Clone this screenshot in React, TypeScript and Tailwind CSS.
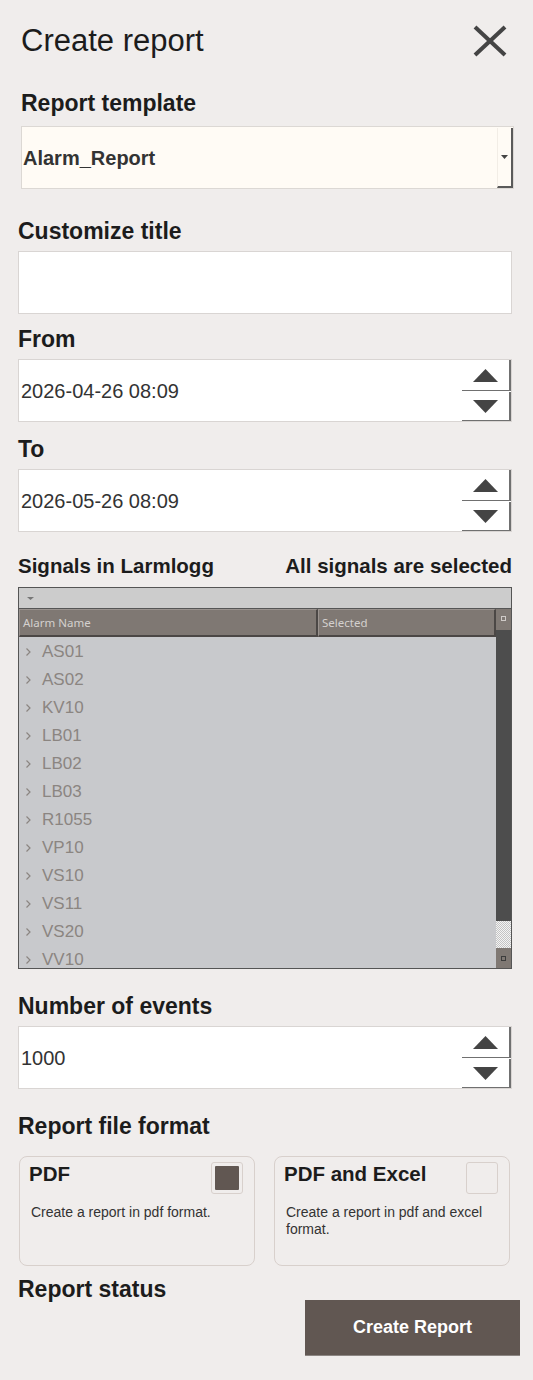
import React from "react";

const SIGNALS = ["AS01", "AS02", "KV10", "LB01", "LB02", "LB03", "R1055", "VP10", "VS10", "VS11", "VS20", "VV10"];

function Label({ children, className = "" }: { children: React.ReactNode; className?: string }) {
  return <div className={`h-[26px] text-[23px] leading-[26px] font-bold text-[#1c1c1c] ${className}`}>{children}</div>;
}

function Triangle({ up }: { up?: boolean }) {
  return (
    <svg width="25" height="13" viewBox="0 0 25 13">
      <polygon points={up ? "12.5,0 25,13 0,13" : "0,0 25,0 12.5,13"} fill="#444" />
    </svg>
  );
}

function SpinBox({ value, className = "" }: { value: string; className?: string }) {
  return (
    <div className={`flex h-[63px] w-[494px] border border-[#d9d5d3] bg-white ${className}`}>
      <div className="flex flex-1 items-center pl-[2px] text-[20px] text-[#333]">{value}</div>
      <div className="flex w-[49px] flex-col">
        <div className="flex h-[31px] items-center justify-center border-r-2 border-b border-[#707070] pt-[1px]">
          <Triangle up />
        </div>
        <div className="h-px bg-white" />
        <div className="flex h-[29px] items-center justify-center border-r-2 border-b border-[#707070]">
          <Triangle />
        </div>
      </div>
    </div>
  );
}

function FormatCard({ title, text, checked }: { title: string; text: string; checked?: boolean }) {
  return (
    <div className="h-[110px] w-[236px] rounded-[8px] border border-[#d8d0cc] pt-[5px] pl-[9px] pr-[11px]">
      <div className="flex items-start justify-between">
        <div className="h-[24px] text-[20.5px] leading-[24px] font-bold text-[#1c1c1c]">{title}</div>
        <div className="h-[32px] w-[32px] rounded-[3px] border border-[#d8d0cc] p-[3px]">
          {checked && <div className="h-full w-full rounded-[1px] bg-[#615752]" />}
        </div>
      </div>
      <div className="mt-[10px] pl-[2px] text-[14px] leading-[17px] text-[#333]">{text}</div>
    </div>
  );
}

function SmallSquare({ dark }: { dark?: boolean }) {
  return <div className={`h-[5px] w-[5px] border ${dark ? "border-[#3c3c3c]" : "border-[#cfcac7]"}`} />;
}

export default function App() {
  return (
    <div className="min-h-[1380px] w-[533px] bg-[#f0edec] pl-[18px] pt-[23px] font-['Liberation_Sans',Arial,sans-serif]">
      {/* header */}
      <div className="ml-[3px] flex w-[493px] items-center justify-between">
        <h1 className="h-[36px] text-[31px] leading-[36px] font-normal text-[#1c1c1c]">Create report</h1>
        <svg width="34" height="32" viewBox="0 0 34 32" className="mr-[7px]">
          <line x1="2" y1="2" x2="32" y2="30" stroke="#444" strokeWidth="4" />
          <line x1="32" y1="2" x2="2" y2="30" stroke="#444" strokeWidth="4" />
        </svg>
      </div>

      <div className="ml-[3px]">
        <Label className="mt-[31px]">Report template</Label>
        <div className="mt-[10px] flex h-[63px] w-[493px] border border-[#dcd8d4] bg-[#fffbf5]">
          <div className="flex flex-1 items-center pl-px text-[20px] font-bold text-[#333]">Alarm_Report</div>
          <div className="mt-px flex w-[16px] items-center justify-center border-l border-l-[#f2ede6] border-r-2 border-b-2 border-r-[#5a5a5a] border-b-[#5a5a5a]">
            <svg width="7" height="4" viewBox="0 0 7 4">
              <polygon points="0,0 7,0 3.5,4" fill="#444" />
            </svg>
          </div>
        </div>
      </div>

      <Label className="mt-[29px]">Customize title</Label>
      <div className="mt-[7px] h-[63px] w-[494px] border border-[#d9d5d3] bg-white" />

      <Label className="mt-[12px]">From</Label>
      <SpinBox className="mt-[7px]" value="2026-04-26 08:09" />

      <Label className="mt-[14px]">To</Label>
      <SpinBox className="mt-[7px]" value="2026-05-26 08:09" />

      <div className="mt-[22px] flex h-[24px] w-[494px] items-center justify-between text-[20.5px] leading-[24px] font-bold text-[#1c1c1c]">
        <span>Signals in Larmlogg</span>
        <span>All signals are selected</span>
      </div>

      {/* signals grid */}
      <div className="mt-[9px] w-[494px] border border-[#555]">
        <div className="flex h-[21px] items-center border-b border-[#555] bg-[#cccccc] pl-[8px]">
          <svg width="7" height="3" viewBox="0 0 7 3">
            <polygon points="0,0 7,0 3.5,3" fill="#777" />
          </svg>
        </div>
        <div className="flex">
          <div className="w-[477px]">
            <div className="flex h-[28px] font-['Noto_Sans',sans-serif] text-[11.5px] text-[#d4d0ce]">
              <div className="flex w-[299px] items-center border-t border-l border-t-[#9a938f] border-l-[#9a938f] border-r-2 border-b-2 border-r-[#4b4745] border-b-[#4b4745] bg-[#7f7873] pl-[3px]">
                Alarm Name
              </div>
              <div className="flex w-[178px] items-center border-t border-l border-t-[#9a938f] border-l-[#9a938f] border-r-2 border-b-2 border-r-[#4b4745] border-b-[#4b4745] bg-[#7f7873] pl-[3px]">
                Selected
              </div>
            </div>
            <div className="h-[331px] overflow-hidden bg-[#c8c9cc]">
              {SIGNALS.map((s) => (
                <div key={s} className="flex h-[28px] items-center pl-[7px] pt-px text-[17px] text-[#8b8581]">
                  <svg width="5" height="8" viewBox="0 0 5 8">
                    <polyline points="0.5,0.5 4,4 0.5,7.5" fill="none" stroke="#8b8581" strokeWidth="1.2" />
                  </svg>
                  <span className="ml-[11px]">{s}</span>
                </div>
              ))}
            </div>
          </div>
          <div className="flex w-[15px] flex-col">
            <div className="flex h-[21px] items-center justify-center bg-[#7f7873] pb-[2px]">
              <SmallSquare />
            </div>
            <div className="flex-1 bg-[#4d4d4d]" />
            <div className="h-[27px] bg-[image:repeating-conic-gradient(#c4c4c4_0%_25%,#f4f4f4_0%_50%)] bg-[length:2px_2px]" />
            <div className="flex h-[20px] items-center justify-center bg-[#7f7873]">
              <SmallSquare dark />
            </div>
          </div>
        </div>
      </div>

      <Label className="mt-[24px]">Number of events</Label>
      <SpinBox className="mt-[7px]" value="1000" />

      <Label className="mt-[24px]">Report file format</Label>
      <div className="mt-[17px] ml-px flex w-[491px] gap-[19px]">
        <FormatCard title="PDF" text="Create a report in pdf format." checked />
        <FormatCard title="PDF and Excel" text="Create a report in pdf and excel format." />
      </div>

      <Label className="mt-[10px]">Report status</Label>
      <div className="-mt-[2px] flex w-[494px] justify-end">
        <button className="-mr-[8px] flex h-[56px] w-[215px] items-center justify-center border-b border-[#8c8683] bg-[#615752] text-[18px] font-bold text-white">
          Create Report
        </button>
      </div>
    </div>
  );
}
